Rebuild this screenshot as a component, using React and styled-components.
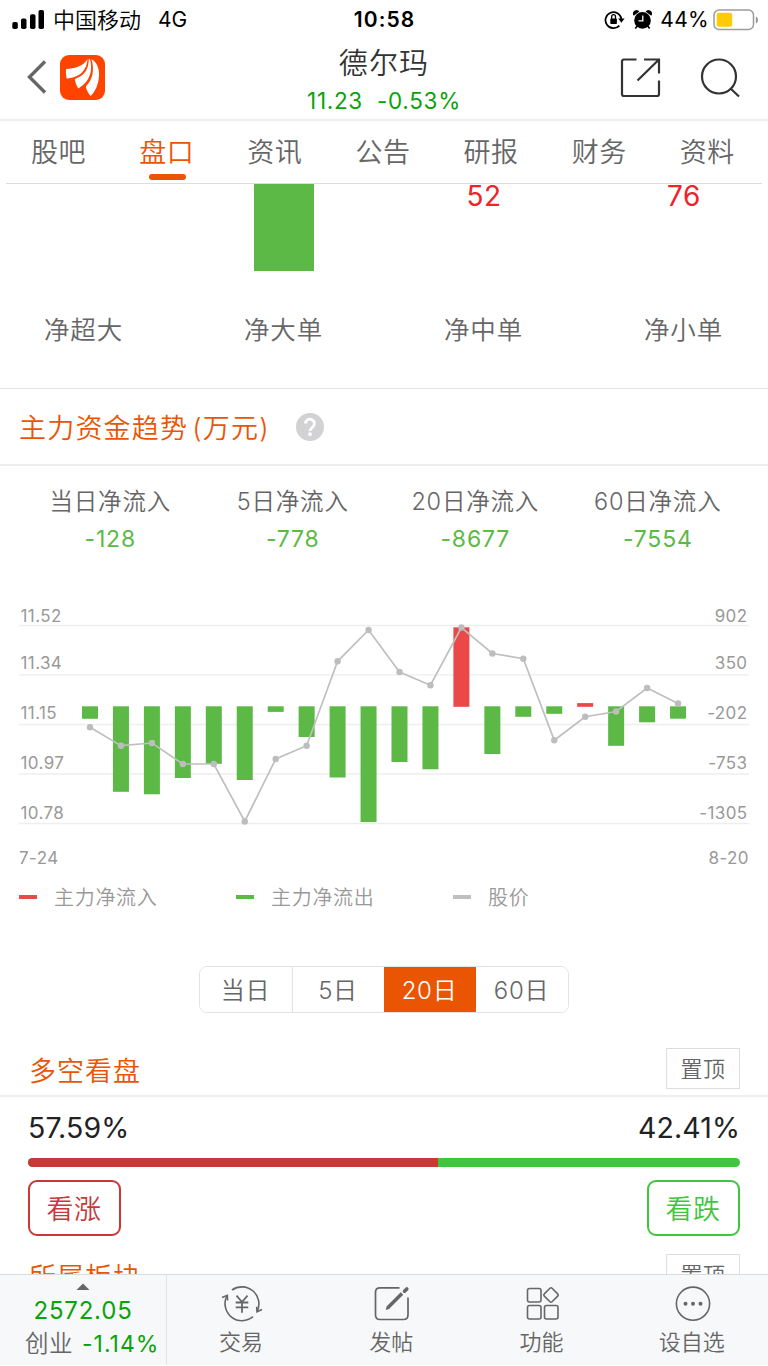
import styled, { createGlobalStyle } from 'styled-components';


const GlobalStyle = createGlobalStyle`
    * {
        box-sizing: border-box;
    }

    body {
        margin: 0;
        background: #fff;
        font-family: Inter, "Noto Sans CJK SC", sans-serif;
        font-weight: 400;
        color: #666;
        overflow: hidden;
    }
`;

const Screen = styled.div`
    width: 768px;
    height: 1365px;
    display: flex;
    flex-direction: column;
    white-space: nowrap;
`;

const StatusBar = styled.div`
    display: grid;
    grid-template-columns: 1fr auto 1fr;
    align-items: center;
    height: 40px;
    padding: 0 9px 0 12px;
    font-size: 21px;
    line-height: 24px;
    color: #000;
`;

const StatusSide = styled.div`
    display: flex;
    align-items: center;
    justify-content: ${props => props.$end ? 'flex-end' : 'flex-start'};
`;

const Carrier = styled.span`
    font-size: 22px;
    font-weight: 350;
    margin: 0 17px 0 8px;
`;

const Time = styled.span`
    font-size: 21px;
    font-weight: 600;
    letter-spacing: 1.1px;
    padding-right: 2px;
`;

const Percent = styled.span`
    font-size: 21px;
    margin: 0 4px 0 8px;
    letter-spacing: 0.3px;
`;

const Header = styled.div`
    display: grid;
    grid-template-columns: 1fr auto 1fr;
    height: 81px;
    border-bottom: 2px solid #eee;
`;

const HeaderLeft = styled.div`
    display: flex;
    align-items: center;
    padding: 0 0 5px 26px;
    gap: 13px;
`;

const HeaderRight = styled.div`
    display: flex;
    align-items: center;
    justify-content: flex-end;
    padding: 0 27px 4px 0;
    gap: 39px;
`;

const StockTitle = styled.div`
    padding-top: 5px;
    text-align: center;
`;

const StockName = styled.div`
    font-size: 29px;
    font-weight: 350;
    line-height: 38px;
    letter-spacing: 1.2px;
    color: #333;
`;

const StockPrice = styled.div`
    display: flex;
    gap: 14px;
    font-size: 22.5px;
    line-height: 36px;
    letter-spacing: 0.7px;
    color: #09a309;
`;

const Tabs = styled.div`
    display: flex;
    justify-content: space-between;
    height: 63px;
    margin: 0 6px;
    padding: 0 27px 0 25px;
    border-bottom: 1px solid #ddd;
`;

const Tab = styled.div`
    display: flex;
    flex-direction: column;
    align-items: center;
    font-size: 27px;
    font-weight: 350;
    line-height: 32px;
    letter-spacing: 0.6px;
    padding-top: 16px;
    color: ${props => props.$active ? '#ea5504' : '#666'};

    &::after {
        content: "";
        width: 37px;
        height: 6px;
        margin: 5px 0 0 2px;
        border-radius: 3px;
        background: ${props => props.$active ? '#ea5504' : 'transparent'};
    }
`;

const Content = styled.div`
    flex: 1;
    min-height: 0;
    overflow: hidden;
`;

const OrderFlow = styled.div`
    display: flex;
    justify-content: space-between;
    height: 205px;
    padding: 0 44px;
    border-bottom: 1px solid #e4e4e4;
`;

const OrderColumn = styled.div`
    display: flex;
    flex-direction: column;
    align-items: center;
    width: 80px;
`;

const OrderFigure = styled.div`
    height: 127px;
    font-size: 28px;
    line-height: 24px;
    letter-spacing: 0.5px;
    color: #f0222a;
`;

const OrderBar = styled.div`
    width: 60px;
    height: 87px;
    background: #5cb946;
`;

const OrderLabel = styled.div`
    font-size: 25.5px;
    font-weight: 350;
    line-height: 37px;
    letter-spacing: 0.9px;
    padding-right: 1px;
`;

const TrendTitle = styled.div`
    display: flex;
    align-items: center;
    gap: 26px;
    height: 77px;
    padding: 0 19px;
    border-bottom: 2px solid #eee;
    font-size: 27px;
    font-weight: 350;
    letter-spacing: 1.2px;
    color: #ea5504;
`;

const Unit = styled.span`
    margin-left: 4px;
`;

const Stats = styled.div`
    display: grid;
    grid-template-columns: repeat(4, 1fr);
    padding: 17px 19px 0;
    text-align: center;
`;

const StatLabel = styled.div`
    font-size: 23.5px;
    font-weight: 350;
    line-height: 37px;
    letter-spacing: 0.8px;
`;

const StatValue = styled.div`
    font-size: 23px;
    line-height: 38px;
    letter-spacing: 0.8px;
    color: #5cb946;
`;

const Chart = styled.svg`
    display: block;
    margin-top: 42px;
    font-size: 17px;
    letter-spacing: 0.4px;
    fill: #999;
`;

const Legend = styled.div`
    display: flex;
    height: 34px;
    padding-left: 19px;
`;

const LegendItem = styled.div`
    display: flex;
    align-items: center;
    gap: 17px;
    width: 217px;
    font-size: 20px;
    font-weight: 350;
    letter-spacing: 0.7px;
    color: #999;

    &::before {
        content: "";
        width: 18px;
        height: 4px;
        margin-top: 2px;
        background: ${props => props.$color};
    }
`;

const Ranges = styled.div`
    display: grid;
    grid-template-columns: repeat(4, 1fr);
    width: 370px;
    height: 47px;
    margin: 53px 0 35px 199px;
    border: 1px solid #e1e3e8;
    border-radius: 8px;
    overflow: hidden;
`;

const Range = styled.div`
    font-size: 24px;
    font-weight: 350;
    line-height: 47px;
    letter-spacing: 0.7px;
    text-align: center;
    padding-right: 1px;
    color: ${props => props.$active ? '#fff' : '#666'};
    background: ${props => props.$active ? '#ea5504' : '#fff'};
    border-left: ${props => props.$divided ? '1px solid #e1e3e8' : 'none'};
`;

const SectionHead = styled.div`
    display: flex;
    align-items: flex-start;
    justify-content: space-between;
    height: 49px;
    padding: 0 28px 0 29px;
    border-bottom: 2px solid #eee;
`;

const SectionTitle = styled.div`
    font-size: 27px;
    font-weight: 350;
    line-height: 48px;
    letter-spacing: 1px;
    color: #ea5504;
`;

const PinButton = styled.div`
    width: 74px;
    height: 41px;
    border: 1px solid #dcdee3;
    font-size: 22px;
    font-weight: 350;
    line-height: 41px;
    letter-spacing: 0.5px;
    text-align: center;
`;

const Sentiment = styled.div`
    height: 157px;
    padding: 11px 28px 0;
`;

const SentimentRow = styled.div`
    display: flex;
    justify-content: space-between;
    font-size: 28.5px;
    line-height: 40px;
    letter-spacing: 0.1px;
    color: #222;
`;

const SentimentBar = styled.div`
    display: flex;
    height: 9px;
    margin: 10px 0 13px;
    border-radius: 5px;
    overflow: hidden;
    background: #3fc63f;
`;

const Bullish = styled.div`
    width: 57.59%;
    background: #c93737;
`;

const VoteButton = styled.div`
    width: 93px;
    height: 56px;
    border: 2px solid ${props => props.$color};
    border-radius: 9px;
    font-size: 27px;
    font-weight: 350;
    line-height: 55px;
    letter-spacing: 0.6px;
    text-align: center;
    padding-right: 1px;
    color: ${props => props.$color};
`;

const Footer = styled.div`
    display: flex;
    height: 91px;
    border-top: 1px solid #d8dade;
    background: #f7f8fa;
`;

const IndexCell = styled.div`
    display: flex;
    flex-direction: column;
    align-items: center;
    width: 167px;
    padding-top: 8px;
    border-right: 1px solid #e0e2e6;
    color: #09a309;
`;

const IndexValue = styled.div`
    margin-top: 4px;
    font-size: 24px;
    line-height: 34px;
    letter-spacing: 0.8px;
`;

const IndexChange = styled.div`
    width: 100%;
    padding-left: 25px;
    font-size: 23px;
    line-height: 32px;
    letter-spacing: 1px;

    span {
        font-size: 23.5px;
        font-weight: 350;
        letter-spacing: 0.5px;
        margin-right: 9px;
        color: #666;
    }
`;

const Action = styled.div`
    flex: 1;
    display: flex;
    flex-direction: column;
    align-items: center;
    padding-top: 8px;
    font-size: 22px;
    font-weight: 350;
    line-height: 34px;
`;

const ActionLabel = styled.span`
    padding-right: 2px;
`;

const tabs = ['股吧', '盘口', '资讯', '公告', '研报', '财务', '资料'];

const orders = [
    { label: '净超大' },
    { label: '净大单', bar: true },
    { label: '净中单', value: 52 },
    { label: '净小单', value: 76 },
];

const stats = [
    ['当日净流入', '-128'],
    ['5日净流入', '-778'],
    ['20日净流入', '-8677'],
    ['60日净流入', '-7554'],
];

const gridLines = [
    { y: 25.5, text: 22, price: '11.52', flow: '902' },
    { y: 74.8, text: 68.5, price: '11.34', flow: '350' },
    { y: 124.5, text: 118.5, price: '11.15', flow: '-202' },
    { y: 174, text: 168.5, price: '10.97', flow: '-753' },
    { y: 223.5, text: 218.5, price: '10.78', flow: '-1305' },
];

// bar length in px below the zero line, inflow is negative
const flows = [12.5, 85.5, 88, 71.7, 57.5, 73.7, 5.6, 30.7, 71.2, 115.7, 55.7, 63, -79.5, 47.7, 10.5, 7.5, -3.7, 39.5, 16, 12.4];

const prices = [127.3, 145.7, 143, 164, 164, 221.5, 159, 145.7, 61.3, 30, 72, 85.2, 27.5, 53.5, 58.7, 140.3, 116.7, 111.5, 88, 103.5];

const ZERO = 106.3;

const pointX = i => 90 + i * 30.95;

function FlowChart() {
    return (
        <Chart width="768" height="279" viewBox="0 0 768 279">
            {gridLines.map(line => (
                <g key={line.price}>
                    <path d={`M19 ${line.y}H749`} stroke="#eee" strokeWidth="1.3" />
                    <text x="20.5" y={line.text}>{line.price}</text>
                    <text x="747.5" y={line.text} textAnchor="end">{line.flow}</text>
                </g>
            ))}
            {flows.map((flow, i) => (
                <rect
                    key={i}
                    x={pointX(i) - 8}
                    y={flow > 0 ? ZERO : ZERO + 0.5 + flow}
                    width="16"
                    height={Math.abs(flow)}
                    fill={flow > 0 ? '#5cb946' : '#eb4848'}
                />
            ))}
            <polyline
                points={prices.map((y, i) => `${pointX(i)},${y}`).join(' ')}
                fill="none"
                stroke="#bfbfbf"
                strokeWidth="1.7"
            />
            {prices.map((y, i) => <circle key={i} cx={pointX(i)} cy={y} r="3.2" fill="#bdbdbd" />)}
            <text x="19" y="264">7-24</text>
            <text x="749" y="264" textAnchor="end">8-20</text>
        </Chart>
    );
}

function Signal() {
    return (
        <svg width="33" height="20" viewBox="0 0 33 20">
            <rect x="0.3" y="12" width="5.5" height="7" rx="1.8" />
            <rect x="9" y="8.5" width="5.5" height="10.5" rx="1.8" />
            <rect x="18" y="4.2" width="5.5" height="14.8" rx="1.8" />
            <rect x="26.5" y="0" width="5.5" height="19" rx="1.8" />
        </svg>
    );
}

function StatusIcons() {
    return (
        <svg width="48" height="24" viewBox="0 0 48 24">
            <g fill="none" stroke="#000" strokeWidth="1.7">
                <path d="M15.4 17.6A8 8 0 1 1 17.4 11" />
                <path d="M7.7 11V8.6a1.9 1.9 0 0 1 3.8 0V11" strokeWidth="1.3" />
            </g>
            <rect x="6.3" y="10.6" width="6.6" height="5.4" rx="0.8" />
            <path d="M14.2 10.5h6.4L17.4 14.8z" />
            <circle cx="38.5" cy="12.4" r="8.3" />
            <path d="M29.8 7.8a3.4 3.4 0 0 1 5.6-4.3zM47.2 7.8a3.4 3.4 0 0 0-5.6-4.3z" />
            <path d="M33.3 18l-2 2.5M43.7 18l2 2.5" stroke="#000" strokeWidth="1.7" />
            <path d="M38.8 7.5v5.3h-4.3" fill="none" stroke="#fff" strokeWidth="1.3" />
        </svg>
    );
}

function Battery() {
    return (
        <svg width="46" height="22" viewBox="0 0 46 22">
            <rect x="1" y="1" width="39.5" height="19.5" rx="5" fill="none" stroke="#9c9c9c" strokeWidth="1.5" />
            <rect x="3.7" y="3.7" width="15.5" height="14" rx="2.5" fill="#ffcb05" />
            <path d="M42.8 7.5c3 1 3 6 0 7z" fill="#9c9c9c" />
        </svg>
    );
}

function Logo() {
    return (
        <svg width="45" height="45" viewBox="0 0 45 45">
            <rect width="45" height="45" rx="9" fill="#ff4400" />
            <g fill="#fff">
                <path d="M27.5 4.3C22.500 12 14 13.600 6.200 14c-.6 3-.3 6.500.6 9.700C12 22.800 18 21.500 22 17.500C25.500 14 27.300 9 27.500 4.300z" />
                <path d="M28.700 4.300C28.800 11 26.500 16.500 22.500 19.800C20 22 17.500 23 14.800 24c.5 3.400 1.700 6.500 3.500 9.500C27 28.500 34 19 30 4.300z" />
                <path d="M31.500 4.300C34.800 15 32.500 25 25.800 31.500c.7 3.700 2.400 6.800 4.900 9.500C37 35 39.500 25 39 17.500C38.600 11.500 36 6.500 31.500 4.300z" />
            </g>
        </svg>
    );
}

function TradeIcon() {
    return (
        <svg width="42" height="42" viewBox="0 0 42 42" fill="none" stroke="#666" strokeWidth="1.6">
            <path d="M11 7A17 17 0 0 1 36.3 28" />
            <path d="M41 26.5l-5 2.2-.3-5" />
            <path d="M32 33.7A17 17 0 0 1 5.9 13" />
            <path d="M1 14.5l5.3-2.2.3 5.2" />
            <path d="M15.5 12.7l5.5 6.3 5.5-6.3M14.7 19.5h12.6M14.7 24.3h12.6M21 19v10.7" strokeWidth="1.8" />
        </svg>
    );
}

function PostIcon() {
    return (
        <svg width="42" height="42" viewBox="0 0 42 42" fill="none" stroke="#666" strokeWidth="1.7">
            <path d="M28.5 4.8H9Q4.5 4.8 4.5 9.3V32Q4.5 36.5 9 36.5H32.5Q37 36.5 37 32V14.5" />
            <path d="M17 24.5L31 10.5" strokeWidth="3.6" />
            <path d="M33.5 8.2L35.8 5.9" strokeWidth="3.6" strokeLinecap="round" />
            <path d="M14.8 27l1-4.2 3 3z" fill="#666" stroke="none" />
        </svg>
    );
}

function GridIcon() {
    return (
        <svg width="42" height="42" viewBox="0 0 42 42" fill="none" stroke="#666" strokeWidth="1.6">
            <rect x="5.5" y="5.5" width="13.5" height="13.5" rx="2" />
            <rect x="5.5" y="22.5" width="13.5" height="13.5" rx="2" />
            <rect x="22.5" y="22.5" width="13.5" height="13.5" rx="2" />
            <rect x="23.5" y="6.5" width="11" height="11" rx="1.5" transform="rotate(45 29 12)" />
        </svg>
    );
}

function MoreIcon() {
    return (
        <svg width="42" height="42" viewBox="0 0 42 42" fill="#666">
            <circle cx="21" cy="20.7" r="16.6" fill="none" stroke="#666" strokeWidth="1.6" />
            <circle cx="13.5" cy="20.7" r="2" />
            <circle cx="21" cy="20.7" r="2" />
            <circle cx="28.5" cy="20.7" r="2" />
        </svg>
    );
}

function App() {

    return (
        <>
            <GlobalStyle />
            <Screen>
                <StatusBar>
                    <StatusSide>
                        <Signal />
                        <Carrier>中国移动</Carrier>
                        <span>4G</span>
                    </StatusSide>
                    <Time>10:58</Time>
                    <StatusSide $end>
                        <StatusIcons />
                        <Percent>44%</Percent>
                        <Battery />
                    </StatusSide>
                </StatusBar>

                <Header>
                    <HeaderLeft>
                        <svg width="21" height="34" viewBox="0 0 21 34" fill="none" stroke="#666" strokeWidth="3.4">
                            <path d="M19 1.5L3.5 17 19 32.5" />
                        </svg>
                        <Logo />
                    </HeaderLeft>
                    <StockTitle>
                        <StockName>德尔玛</StockName>
                        <StockPrice><span>11.23</span><span>-0.53%</span></StockPrice>
                    </StockTitle>
                    <HeaderRight>
                        <svg width="41" height="40" viewBox="0 0 41 40" fill="none" stroke="#333" strokeWidth="2.2">
                            <path d="M16.500 1.500H4Q2 1.500 2 3.500V36Q2 38 4 38H37Q39 38 39 36V22.500" />
                            <path d="M24 1.500H39V15.500M38.500 2L17.500 22.500" />
                        </svg>
                        <svg width="41" height="40" viewBox="0 0 41 40" fill="none" stroke="#333" strokeWidth="2.2">
                            <circle cx="19" cy="18.5" r="17" />
                            <path d="M30.5 30.5L39 38.5" />
                        </svg>
                    </HeaderRight>
                </Header>

                <Tabs>
                    {tabs.map(tab => <Tab key={tab} $active={tab === '盘口'}>{tab}</Tab>)}
                </Tabs>

                <Content>
                    <OrderFlow>
                        {orders.map(order => (
                            <OrderColumn key={order.label}>
                                <OrderFigure>{order.bar ? <OrderBar /> : order.value}</OrderFigure>
                                <OrderLabel>{order.label}</OrderLabel>
                            </OrderColumn>
                        ))}
                    </OrderFlow>

                    <TrendTitle>
                        <div>主力资金趋势<Unit>(万元)</Unit></div>
                        <svg width="28" height="28" viewBox="0 0 28 28">
                            <circle cx="14" cy="14" r="14" fill="#d2d2d4" />
                            <path d="M9.6 10.6a4.4 4.4 0 1 1 6.8 3.7c-1.6 1.1-2.4 1.7-2.4 3.6" fill="none" stroke="#fff" strokeWidth="2.8" />
                            <circle cx="14" cy="21.2" r="1.9" fill="#fff" />
                        </svg>
                    </TrendTitle>

                    <Stats>
                        {stats.map(([label, value]) => (
                            <div key={label}>
                                <StatLabel>{label}</StatLabel>
                                <StatValue>{value}</StatValue>
                            </div>
                        ))}
                    </Stats>

                    <FlowChart />

                    <Legend>
                        <LegendItem $color="#eb4848">主力净流入</LegendItem>
                        <LegendItem $color="#5cb946">主力净流出</LegendItem>
                        <LegendItem $color="#bfbfbf">股价</LegendItem>
                    </Legend>

                    <Ranges>
                        <Range>当日</Range>
                        <Range $divided>5日</Range>
                        <Range $active>20日</Range>
                        <Range>60日</Range>
                    </Ranges>

                    <SectionHead>
                        <SectionTitle>多空看盘</SectionTitle>
                        <PinButton>置顶</PinButton>
                    </SectionHead>
                    <Sentiment>
                        <SentimentRow><span>57.59%</span><span>42.41%</span></SentimentRow>
                        <SentimentBar><Bullish /></SentimentBar>
                        <SentimentRow>
                            <VoteButton $color="#c93737">看涨</VoteButton>
                            <VoteButton $color="#3fc63f">看跌</VoteButton>
                        </SentimentRow>
                    </Sentiment>

                    <SectionHead>
                        <SectionTitle>所属板块</SectionTitle>
                        <PinButton>置顶</PinButton>
                    </SectionHead>
                </Content>

                <Footer>
                    <IndexCell>
                        <svg width="14" height="7" viewBox="0 0 14 7"><path d="M0.5 7L7 0.5 13.5 7z" fill="#666" /></svg>
                        <IndexValue>2572.05</IndexValue>
                        <IndexChange><span>创业</span>-1.14%</IndexChange>
                    </IndexCell>
                    <Action><TradeIcon /><ActionLabel>交易</ActionLabel></Action>
                    <Action><PostIcon /><ActionLabel>发帖</ActionLabel></Action>
                    <Action><GridIcon /><ActionLabel>功能</ActionLabel></Action>
                    <Action><MoreIcon /><ActionLabel>设自选</ActionLabel></Action>
                </Footer>
            </Screen>
        </>
    );
}

export default App;
